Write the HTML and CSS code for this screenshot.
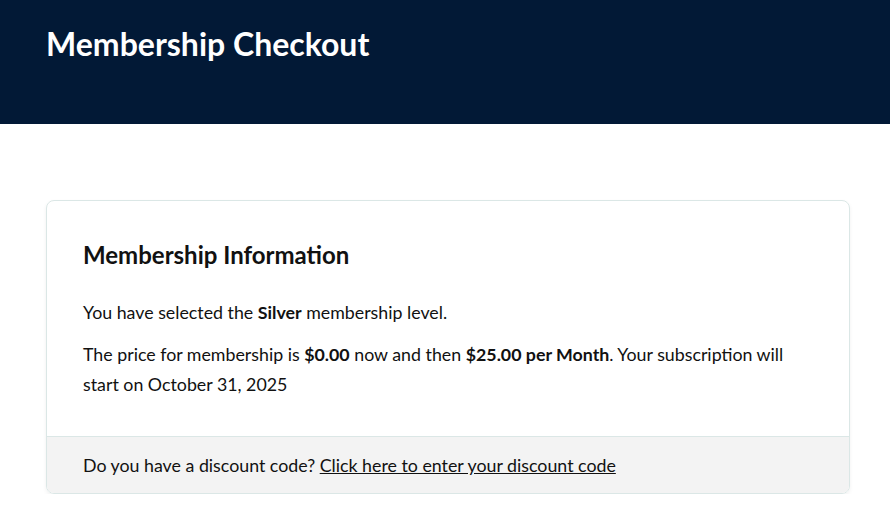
FILE: index.html
```html
<!DOCTYPE html>
<html lang="en">
<head>
    <meta charset="UTF-8">
    <meta name="viewport" content="width=device-width, initial-scale=1.0">
    <title>Membership Checkout</title>
    <link rel="stylesheet" href="styles.css">
</head>
<body>
    <header class="page-header">
        <h1>Membership Checkout</h1>
    </header>
    <main class="checkout">
        <section class="card">
            <div class="card-body">
                <h2>Membership Information</h2>
                <p>You have selected the <strong>Silver</strong> membership level.</p>
                <p>The price for membership is <strong>$0.00</strong> now and then <strong>$25.00 per Month</strong>. Your subscription will start on October 31, 2025</p>
            </div>
            <div class="card-footer">
                Do you have a discount code? <a href="#">Click here to enter your discount code</a>
            </div>
        </section>
    </main>
</body>
</html>
```

FILE: styles.css
```css
body {
    margin: 0;
    font-family: Lato, "Open Sans", sans-serif;
    color: #111;
    background: #fff;
}

.page-header {
    background-color: #021936;
    height: 124px;
    padding: 0 46px;
    box-sizing: border-box;
}

.page-header h1 {
    margin: 0;
    padding-top: 24px;
    color: #fff;
    font-size: 32px;
    font-weight: 700;
    line-height: 40px;
}

.checkout {
    padding: 76px 40px 0 46px;
}

.card {
    border: 1px solid #dbe7e6;
    border-radius: 8px;
    box-shadow: 0 2px 4px rgba(0, 0, 0, 0.06);
    overflow: hidden;
}

.card-body {
    padding: 38px 36px 25px;
}

.card-body h2 {
    margin: 0 0 26px;
    font-size: 24px;
    font-weight: 700;
    line-height: 32px;
}

.card-body p {
    margin: 0 0 12px;
    font-size: 17.8px;
    line-height: 30px;
}

.card-footer {
    background: #f3f3f3;
    border-top: 1px solid #dbe7e6;
    padding: 13px 36px;
    font-size: 17.8px;
    line-height: 30px;
}

.card-footer a {
    color: #111;
    text-decoration: underline;
}
```
